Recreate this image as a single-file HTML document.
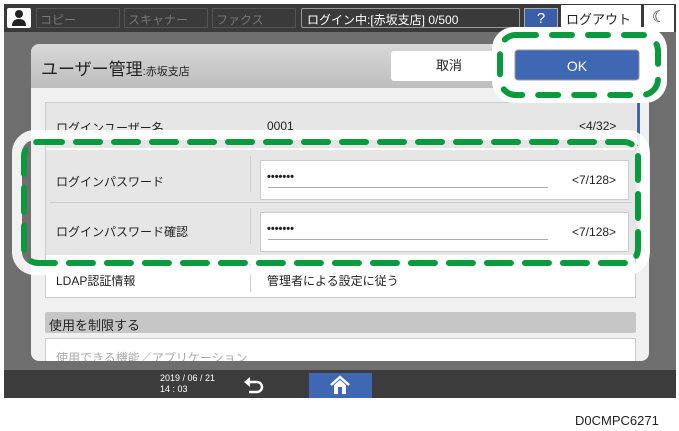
<!DOCTYPE html>
<html><head><meta charset="utf-8"><style>
*{margin:0;padding:0;box-sizing:border-box}
body{width:679px;height:431px;background:#fff;position:relative;overflow:hidden;font-family:"Liberation Sans","Noto Sans CJK JP",sans-serif;}
.a{position:absolute}
.t{font-size:12px;color:#222;white-space:nowrap}
</style></head><body>
<div class="a" style="left:4px;top:4px;width:672px;height:394px;background:#6f6f6f"></div>
<!-- top bar -->
<div class="a" style="left:4px;top:4px;width:672px;height:28px;background:#3a3a3a"></div>
<div class="a" style="left:7px;top:8px;width:24px;height:20px;background:#fff;border-radius:2px"></div>
<svg class="a" style="left:11px;top:9px" width="16" height="18"><circle cx="8" cy="5" r="4" fill="#222"/><path d="M1 17 Q1 10 8 10 Q15 10 15 17Z" fill="#222"/></svg>
<div class="a t" style="left:36px;top:8px;width:84px;height:20px;border:1px solid #555;color:#777;padding:2px 3px">コピー</div>
<div class="a t" style="left:124px;top:8px;width:84px;height:20px;border:1px solid #555;color:#777;padding:2px 3px">スキャナー</div>
<div class="a t" style="left:212px;top:8px;width:84px;height:20px;border:1px solid #555;color:#777;padding:2px 3px">ファクス</div>
<div class="a t" style="left:301px;top:8px;width:219px;height:20px;border:1px solid #999;border-radius:2px;color:#fff;padding:2px 5px">ログイン中:[赤坂支店] 0/500</div>
<div class="a" style="left:524px;top:8px;width:34px;height:22px;background:#3b5ea8;border:1px solid #aaa;color:#fff;font-size:15px;text-align:center;line-height:20px">?</div>
<div class="a t" style="left:561px;top:5px;width:80px;height:27px;background:#fff;font-size:13px;padding:4px 5px">ログアウト</div>
<div class="a" style="left:644px;top:5px;width:30px;height:27px;background:#fff;font-size:16px;text-align:center;line-height:26px;color:#222">☾</div>
<!-- dialog -->
<div class="a" style="left:31px;top:44px;width:618px;height:317px;background:#f0f0f0;border-radius:8px;overflow:hidden">
  <div class="a" style="left:0;top:0;width:618px;height:44px;background:linear-gradient(#d8d8d8,#bdbdbd)"></div>
  <div class="a" style="left:10px;top:11px;font-size:17px;color:#222;white-space:nowrap">ユーザー管理<span style="font-size:11px">:赤坂支店</span></div>
  <div class="a t" style="left:360px;top:7px;width:116px;height:30px;background:#fff;border-radius:3px;font-size:13px;text-align:center;line-height:30px">取消</div>
  <div class="a" style="left:485px;top:7px;width:124px;height:30px;background:#3f67b4;border-radius:3px;color:#fff;font-size:14px;text-align:center;line-height:30px">OK</div>
  <div class="a" style="left:14px;top:58px;width:591px;height:196px;background:#fff;border:1px solid #ccc"></div>
  <div class="a" style="left:15px;top:59px;width:590px;height:45px;background:#e6e6e6"></div>
  <div class="a" style="left:606px;top:58px;width:3px;height:44px;background:#3f67b4"></div>
  <div class="a t" style="left:25px;top:75px">ログインユーザー名</div>
  <div class="a t" style="left:236px;top:75px">0001</div>
  <div class="a t" style="left:548px;top:75px">&lt;4/32&gt;</div>
  <div class="a" style="left:15px;top:106px;width:590px;height:105px;background:#e6e6e6"></div>
  <div class="a" style="left:19px;top:158px;width:582px;height:1px;background:#ccc"></div>
  <div class="a" style="left:219px;top:112px;width:1px;height:36px;background:#ccc"></div>
  <div class="a" style="left:219px;top:164px;width:1px;height:36px;background:#ccc"></div>
  <div class="a t" style="left:25px;top:129px">ログインパスワード</div>
  <div class="a t" style="left:25px;top:179px">ログインパスワード確認</div>
  <div class="a" style="left:229px;top:116px;width:369px;height:40px;background:#fff;border:1px solid #ccc"></div>
  <div class="a" style="left:229px;top:168px;width:369px;height:40px;background:#fff;border:1px solid #ccc"></div>
  <div class="a t" style="left:236px;top:127px;font-size:11px;font-weight:bold">•••••••</div>
  <div class="a t" style="left:236px;top:179px;font-size:11px;font-weight:bold">•••••••</div>
  <div class="a" style="left:237px;top:143px;width:280px;height:1px;background:#aaa"></div>
  <div class="a" style="left:237px;top:195px;width:280px;height:1px;background:#aaa"></div>
  <div class="a t" style="left:541px;top:129px">&lt;7/128&gt;</div>
  <div class="a t" style="left:541px;top:181px">&lt;7/128&gt;</div>
  <div class="a t" style="left:25px;top:228px">LDAP認証情報</div>
  <div class="a" style="left:219px;top:220px;width:1px;height:28px;background:#ccc"></div>
  <div class="a t" style="left:236px;top:228px">管理者による設定に従う</div>
  <div class="a" style="left:14px;top:268px;width:591px;height:21px;background:#c6c6c6;border-radius:2px"></div>
  <div class="a t" style="left:18px;top:271px;font-size:13px">使用を制限する</div>
  <div class="a" style="left:14px;top:294px;width:591px;height:30px;background:#fff;border:1px solid #ccc"></div>
  <div class="a t" style="left:25px;top:305px;color:#aaa">使用できる機能／アプリケーション</div>
</div>
<!-- bottom bar -->
<div class="a" style="left:4px;top:370px;width:672px;height:28px;background:#3c3c3c"></div>
<div class="a" style="left:160px;top:373px;color:#fff;font-size:9px;line-height:11px">2019 / 06 / 21<br>14 : 03</div>
<svg class="a" style="left:243px;top:376px" width="24" height="18"><path d="M4 6 H14 A5 5 0 0 1 14 16 H6" stroke="#fff" stroke-width="2.5" fill="none"/><path d="M1 6 L7 1 V11Z" fill="#fff"/></svg>
<div class="a" style="left:309px;top:373px;width:63px;height:25px;background:#3f67b4"></div>
<svg class="a" style="left:329px;top:375px" width="22" height="20"><path d="M2 10 L11 2 L20 10" stroke="#fff" stroke-width="2.5" fill="none"/><path d="M5 10 V19 H17 V10 L11 5Z" fill="#fff"/><rect x="9" y="12" width="4" height="7" fill="#3f67b4"/></svg>
<div class="a" style="left:575px;top:413px;font-size:13px;color:#222">D0CMPC6271</div>
<!-- overlays -->
<svg class="a" style="left:0;top:0" width="679" height="431">
<rect x="17" y="135" width="628" height="135" rx="18" fill="none" stroke="#fff" stroke-width="10" opacity="0.9"/>
<rect x="24" y="142" width="614" height="121" rx="14" fill="none" stroke="#0a9a3e" stroke-width="6" stroke-dasharray="24 14" stroke-linecap="round"/>
<rect x="492" y="27" width="175" height="76" rx="22" fill="#fff"/>
<rect x="515" y="50" width="124" height="30" rx="3" fill="#3f67b4" stroke="#999"/>
<text x="577" y="71" fill="#fff" font-size="14" text-anchor="middle" font-family="Liberation Sans">OK</text>
<rect x="500" y="35" width="158" height="60" rx="16" fill="none" stroke="#0a9a3e" stroke-width="6" stroke-dasharray="20 16" stroke-linecap="round"/>
</svg>
</body></html>
